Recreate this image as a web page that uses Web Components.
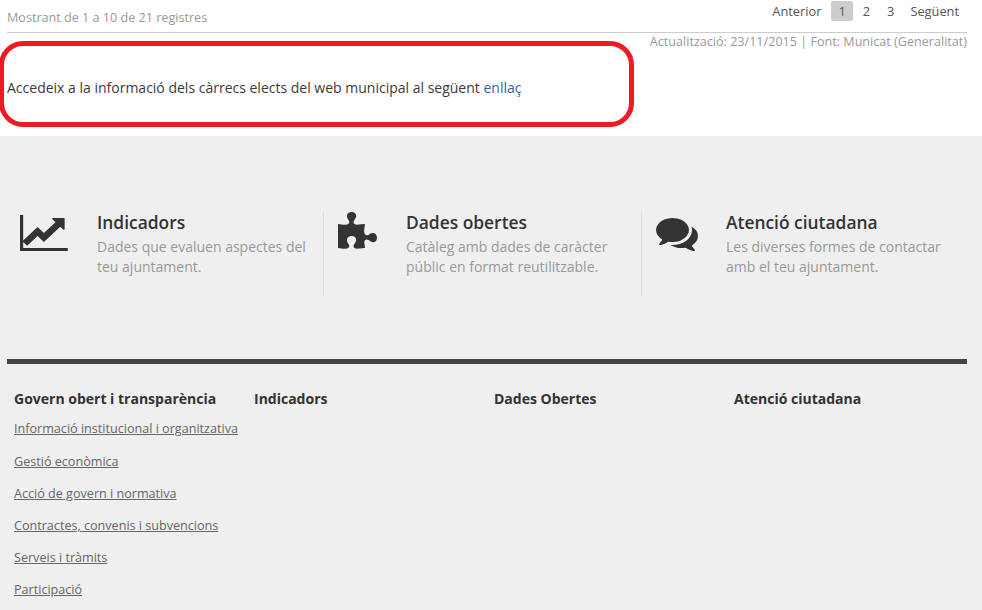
<!DOCTYPE html>
<html lang="ca">
<head>
<meta charset="utf-8">
<title>Govern obert i transparència</title>
<style>
  html, body { margin: 0; height: 610px; overflow: hidden; background: #efefef; }
  body { font-family: "Open Sans", "Liberation Sans", sans-serif; color: #333; }
</style>
</head>
<body>
<results-panel>
  <span slot="info">Mostrant de 1 a 10 de 21 registres</span>
  <span slot="source">Actualització: 23/11/2015 | Font: Municat (Generalitat)</span>
  Accedeix a la informació dels càrrecs elects del web municipal al següent <a href="#">enllaç</a>
</results-panel>

<feature-row>
  <feature-item title-text="Indicadors" style="--left:13px;--gap:26px;--width:316px">
    <svg slot="icon" width="51" height="42" viewBox="0 0 2048 1792" preserveAspectRatio="none" fill="#333"><path d="M1920 1536v128h-1920v-1536h128v1408h1792zm-128-1248v435q0 21-19.5 29.5t-35.5-7.5l-121-121-633 633q-10 10-23 10t-23-10l-233-233-416 416-192-192 585-585q10-10 23-10t23 10l233 233 464-464-121-121q-16-16-7.5-35.5t29.5-19.5h435q14 0 23 9t9 23z"/></svg>
    Dades que evaluen aspectes del teu ajuntament.
  </feature-item>
  <feature-item title-text="Dades obertes" divider style="--left:14px;--gap:26px;--width:318px">
    <svg slot="icon" width="42" height="42" viewBox="0 0 1792 1792" fill="#333"><path d="M1664 1098q0 81-44.5 135t-123.5 54q-41 0-77.5-17.5t-59-38-56.5-38-71-17.5q-110 0-110 124 0 39 16 115t15 115v5q-22 0-33 1-34 3-97.5 11.5t-115.5 13.5-98 5q-61 0-103-26.5t-42-83.5q0-37 17.5-71t38-56.5 38-59 17.5-77.5q0-79-54-123.5t-135-44.5q-84 0-143 45.5t-59 127.5q0 43 15 83t33.5 64.5 33.5 53 15 50.5q0 45-46 89-37 35-117 35-95 0-245-24-9-2-27.5-4t-27.5-4l-13-2q-1 0-3-1-2 0-2-1v-1024q2 1 17.5 3.5t34 5 21.5 3.5q150 24 245 24 80 0 117-35 46-44 46-89 0-22-15-50.5t-33.5-53-33.5-64.5-15-83q0-82 59-127.5t144-45.5q80 0 134 44.5t54 123.5q0 41-17.5 77.5t-38 59-38 56.5-17.5 71q0 57 42 83.5t103 26.5q64 0 180-15t163-17v2q-1 2-3.5 17.5t-5 34-3.5 21.5q-24 150-24 245 0 80 35 117 44 46 89 46 22 0 50.5-15t53-33.5 64.5-33.5 83-15q82 0 127.5 59t45.5 143z"/></svg>
    Catàleg amb dades de caràcter públic en format reutilitzable.
  </feature-item>
  <feature-item title-text="Atenció ciutadana" divider style="--left:14px;--gap:28px;--width:326px">
    <svg slot="icon" width="42" height="42" viewBox="0 0 1792 1792" fill="#333"><path d="M1408 768q0 139-94 257t-256.5 186.5-353.5 68.5q-86 0-176-16-124 88-278 128-36 9-86 16h-3q-11 0-20.5-8t-11.5-21q-1-3-1-6.5t.5-6.5 2-6l2.5-5 3.5-5.5 4-5 4.5-5 4-4.5q5-6 23-25t26-29.5 22.5-29 25-38.5 20.5-44q-124-72-195-177t-71-224q0-139 94-257t256.5-186.5 353.5-68.5 353.5 68.5 256.5 186.5 94 257zm384 256q0 120-71 224.5t-195 176.5q10 24 20.5 44t25 38.5 22.5 29 26 29.5 23 25q1 1 4 4.5t4.5 5 4 5 3.5 5.5l2.5 5 2 6 .5 6.5-1 6.5q-3 14-13 22t-22 7q-50-7-86-16-154-40-278-128-90 16-176 16-271 0-472-132 58 4 88 4 161 0 309-45t264-129q125-92 192-212t67-254q0-77-23-152 129 71 204 178t75 230z"/></svg>
    Les diverses formes de contactar amb el teu ajuntament.
  </feature-item>
</feature-row>

<site-footer>
  <footer-column title-text="Govern obert i transparència">
    <a href="#">Informació institucional i organitzativa</a>
    <a href="#">Gestió econòmica</a>
    <a href="#">Acció de govern i normativa</a>
    <a href="#">Contractes, convenis i subvencions</a>
    <a href="#">Serveis i tràmits</a>
    <a href="#">Participació</a>
  </footer-column>
  <footer-column title-text="Indicadors"></footer-column>
  <footer-column title-text="Dades Obertes"></footer-column>
  <footer-column title-text="Atenció ciutadana"></footer-column>
</site-footer>

<script>
  customElements.define('results-panel',
    /**
     * White top block with the table info, the pager and the marked notice.
     */
    class extends HTMLElement {
      constructor () {
        super()
        this.attachShadow({ mode: 'open' }).innerHTML = `
          <style>
            :host { display: block; position: relative; height: 136px; background: #fff; box-sizing: border-box; padding: 0 15px 0 7px; }
            #top { display: flex; justify-content: space-between; height: 32px; border-bottom: 1px solid #ccc; box-sizing: content-box; }
            #info { font-size: 12.6px; line-height: 35px; color: #999; }
            #source { font-size: 12.6px; line-height: 18px; color: #999; text-align: right; }
            #notice { font-size: 14px; line-height: 20px; color: #3a3a3a; margin-top: 27px; }
            #mark { position: absolute; left: -1px; top: 41px; width: 635px; height: 86px; box-sizing: border-box; border: 5px solid #ed1c24; border-radius: 24px; }
            ::slotted(a) { color: #31689c; text-decoration: none; }
          </style>
          <div id="top"><div id="info"><slot name="info"></slot></div><results-pager></results-pager></div>
          <div id="source"><slot name="source"></slot></div>
          <div id="notice"><slot></slot></div>
          <div id="mark"></div>`
      }
    })

  customElements.define('results-pager',
    /**
     * Pager with previous, page numbers and next.
     */
    class extends HTMLElement {
      constructor () {
        super()
        this.attachShadow({ mode: 'open' }).innerHTML = `
          <style>
            :host { display: flex; align-items: flex-start; font-size: 12.8px; color: #555; padding: 1px 2px 0 0; }
            span { display: block; height: 20px; line-height: 20px; padding: 0 6px; }
            .on { background: #ccc; border-radius: 2px; padding: 0 7px; margin: 0 4px 0 4px; }
            .gap { margin-left: 5px; }
            .wide { margin-left: 4px; }
          </style>
          <span>Anterior</span><span class="on">1</span><span>2</span><span class="gap">3</span><span class="wide">Següent</span>`
      }
    })

  customElements.define('feature-row',
    /**
     * Row of the three feature blocks.
     */
    class extends HTMLElement {
      constructor () {
        super()
        this.attachShadow({ mode: 'open' }).innerHTML = `
          <style>
            :host { display: flex; padding: 75px 0 63px 7px; }
          </style>
          <slot></slot>`
      }
    })

  customElements.define('feature-item',
    /**
     * One feature: icon, title and description, optional divider on the left.
     */
    class extends HTMLElement {
      constructor () {
        super()
        this.attachShadow({ mode: 'open' }).innerHTML = `
          <style>
            :host { display: flex; box-sizing: border-box; width: var(--width); height: 85px; padding-left: var(--left); }
            :host([divider]) { border-left: 1px solid #ddd; }
            #icon { flex: none; height: 42px; margin: 1px var(--gap) 0 0; line-height: 0; }
            h3 { margin: 0; font-size: 17.4px; font-weight: 600; line-height: 22px; color: #333; }
            p { margin: 0; font-size: 14px; line-height: 20px; color: #999; padding-top: 4px; max-width: 222px; }
          </style>
          <div id="icon"><slot name="icon"></slot></div>
          <div><h3></h3><p><slot></slot></p></div>`
        this.shadowRoot.querySelector('h3').textContent = this.getAttribute('title-text')
      }
    })

  customElements.define('site-footer',
    /**
     * Footer with the thick rule and its link columns.
     */
    class extends HTMLElement {
      constructor () {
        super()
        this.attachShadow({ mode: 'open' }).innerHTML = `
          <style>
            :host { display: block; margin: 0 15px 0 7px; border-top: 5px solid #444; }
            #cols { display: grid; grid-template-columns: repeat(4, 240px); padding: 25px 0 0 7px; }
          </style>
          <div id="cols"><slot></slot></div>`
      }
    })

  customElements.define('footer-column',
    /**
     * Footer column: bold title and a list of underlined links.
     */
    class extends HTMLElement {
      constructor () {
        super()
        this.attachShadow({ mode: 'open' }).innerHTML = `
          <style>
            :host { display: block; }
            h4 { margin: 0 0 11px; font-size: 14px; font-weight: 700; line-height: 20px; color: #333; }
            #links { display: flex; flex-direction: column; align-items: flex-start; gap: 14px; }
            ::slotted(a) { font-size: 12.6px; line-height: 18px; color: #666; text-decoration: underline; }
            ::slotted(a:first-child) { margin-bottom: 1px; }
          </style>
          <h4></h4><div id="links"><slot></slot></div>`
        this.shadowRoot.querySelector('h4').textContent = this.getAttribute('title-text')
      }
    })
</script>
</body>
</html>
